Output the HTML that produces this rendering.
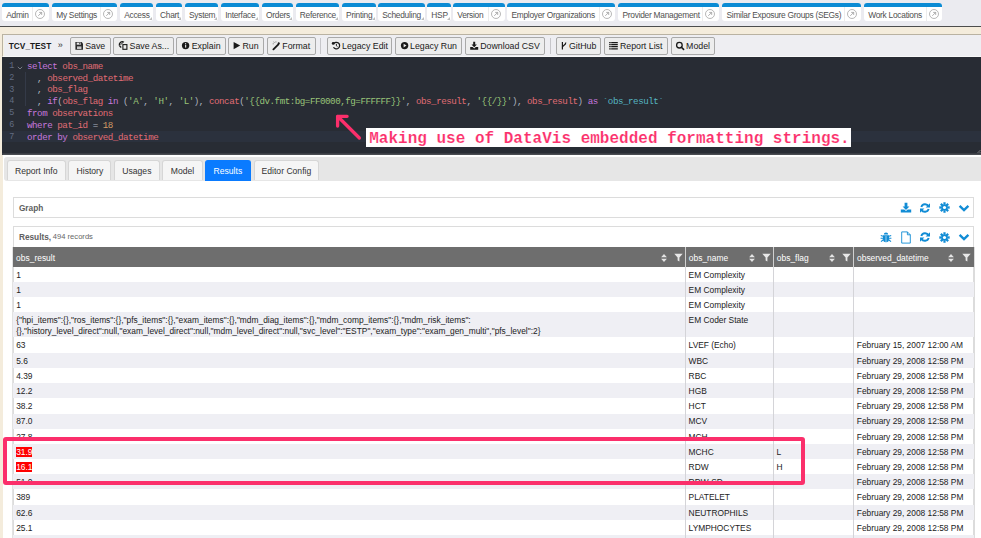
<!DOCTYPE html>
<html><head><meta charset="utf-8"><style>
html,body{margin:0;padding:0;width:981px;height:538px;overflow:hidden;background:#f4ecdc}
div{box-sizing:content-box}
</style></head><body>
<div style="position:absolute;left:0.00px;top:0.00px;width:981.00px;height:26.00px;background:#ebebf0"></div><div style="position:absolute;left:0.00px;top:26.00px;width:981.00px;height:1.00px;background:#4d4d4d"></div><div style="position:absolute;left:0.00px;top:27.00px;width:981.00px;height:511.00px;background:#f4ecdc"></div><div style="position:absolute;left:2.00px;top:3.00px;width:47.00px;height:18.00px;background:#fff;border-radius:3px;"></div><div style="position:absolute;left:2.00px;top:3.00px;width:47.00px;height:4.00px;background:#0b8bd4;border-radius:3px 3px 0 0;"></div><div style="position:absolute;left:6.20px;top:11.19px;font:400 8.4px/8.4px 'Liberation Sans', sans-serif;color:#505050;white-space:pre;letter-spacing:-0.27px">Admin</div><div style="position:absolute;left:31.80px;top:7.00px;width:0.80px;height:14.00px;background:#ececec"></div><svg width="10" height="10" viewBox="0 0 10 10" style="position:absolute;left:35.10px;top:8.90px"><circle cx="5" cy="5" r="4.5" fill="none" stroke="#9a9a9a" stroke-width="0.7"/><path d="M3.3 6.8 L6.6 3.5 M4.2 3.4 H6.7 V5.9" fill="none" stroke="#9a9a9a" stroke-width="0.8"/></svg><div style="position:absolute;left:52.00px;top:3.00px;width:65.20px;height:18.00px;background:#fff;border-radius:3px;"></div><div style="position:absolute;left:52.00px;top:3.00px;width:65.20px;height:4.00px;background:#0b8bd4;border-radius:3px 3px 0 0;"></div><div style="position:absolute;left:56.20px;top:11.19px;font:400 8.4px/8.4px 'Liberation Sans', sans-serif;color:#505050;white-space:pre;letter-spacing:-0.27px">My Settings</div><div style="position:absolute;left:100.30px;top:7.00px;width:0.80px;height:14.00px;background:#ececec"></div><svg width="10" height="10" viewBox="0 0 10 10" style="position:absolute;left:103.45px;top:8.90px"><circle cx="5" cy="5" r="4.5" fill="none" stroke="#9a9a9a" stroke-width="0.7"/><path d="M3.3 6.8 L6.6 3.5 M4.2 3.4 H6.7 V5.9" fill="none" stroke="#9a9a9a" stroke-width="0.8"/></svg><div style="position:absolute;left:120.00px;top:3.00px;width:32.80px;height:18.00px;background:#fff;border-radius:3px;"></div><div style="position:absolute;left:120.00px;top:3.00px;width:32.80px;height:4.00px;background:#0b8bd4;border-radius:3px 3px 0 0;"></div><div style="position:absolute;left:124.20px;top:11.19px;font:400 8.4px/8.4px 'Liberation Sans', sans-serif;color:#505050;white-space:pre;letter-spacing:-0.27px">Access</div><svg width="3" height="3" viewBox="0 0 3 3" style="position:absolute;left:148.80px;top:17.00px"><path d="M3 0 V3 H0 Z" fill="#bdbdbd"/></svg><div style="position:absolute;left:155.80px;top:3.00px;width:25.90px;height:18.00px;background:#fff;border-radius:3px;"></div><div style="position:absolute;left:155.80px;top:3.00px;width:25.90px;height:4.00px;background:#0b8bd4;border-radius:3px 3px 0 0;"></div><div style="position:absolute;left:160.00px;top:11.19px;font:400 8.4px/8.4px 'Liberation Sans', sans-serif;color:#505050;white-space:pre;letter-spacing:-0.27px">Chart</div><svg width="3" height="3" viewBox="0 0 3 3" style="position:absolute;left:177.70px;top:17.00px"><path d="M3 0 V3 H0 Z" fill="#bdbdbd"/></svg><div style="position:absolute;left:184.80px;top:3.00px;width:33.30px;height:18.00px;background:#fff;border-radius:3px;"></div><div style="position:absolute;left:184.80px;top:3.00px;width:33.30px;height:4.00px;background:#0b8bd4;border-radius:3px 3px 0 0;"></div><div style="position:absolute;left:189.00px;top:11.19px;font:400 8.4px/8.4px 'Liberation Sans', sans-serif;color:#505050;white-space:pre;letter-spacing:-0.27px">System</div><svg width="3" height="3" viewBox="0 0 3 3" style="position:absolute;left:214.10px;top:17.00px"><path d="M3 0 V3 H0 Z" fill="#bdbdbd"/></svg><div style="position:absolute;left:221.00px;top:3.00px;width:37.70px;height:18.00px;background:#fff;border-radius:3px;"></div><div style="position:absolute;left:221.00px;top:3.00px;width:37.70px;height:4.00px;background:#0b8bd4;border-radius:3px 3px 0 0;"></div><div style="position:absolute;left:225.20px;top:11.19px;font:400 8.4px/8.4px 'Liberation Sans', sans-serif;color:#505050;white-space:pre;letter-spacing:-0.27px">Interface</div><svg width="3" height="3" viewBox="0 0 3 3" style="position:absolute;left:254.70px;top:17.00px"><path d="M3 0 V3 H0 Z" fill="#bdbdbd"/></svg><div style="position:absolute;left:261.80px;top:3.00px;width:31.10px;height:18.00px;background:#fff;border-radius:3px;"></div><div style="position:absolute;left:261.80px;top:3.00px;width:31.10px;height:4.00px;background:#0b8bd4;border-radius:3px 3px 0 0;"></div><div style="position:absolute;left:266.00px;top:11.19px;font:400 8.4px/8.4px 'Liberation Sans', sans-serif;color:#505050;white-space:pre;letter-spacing:-0.27px">Orders</div><svg width="3" height="3" viewBox="0 0 3 3" style="position:absolute;left:288.90px;top:17.00px"><path d="M3 0 V3 H0 Z" fill="#bdbdbd"/></svg><div style="position:absolute;left:295.60px;top:3.00px;width:43.60px;height:18.00px;background:#fff;border-radius:3px;"></div><div style="position:absolute;left:295.60px;top:3.00px;width:43.60px;height:4.00px;background:#0b8bd4;border-radius:3px 3px 0 0;"></div><div style="position:absolute;left:299.80px;top:11.19px;font:400 8.4px/8.4px 'Liberation Sans', sans-serif;color:#505050;white-space:pre;letter-spacing:-0.27px">Reference</div><svg width="3" height="3" viewBox="0 0 3 3" style="position:absolute;left:335.20px;top:17.00px"><path d="M3 0 V3 H0 Z" fill="#bdbdbd"/></svg><div style="position:absolute;left:341.90px;top:3.00px;width:33.80px;height:18.00px;background:#fff;border-radius:3px;"></div><div style="position:absolute;left:341.90px;top:3.00px;width:33.80px;height:4.00px;background:#0b8bd4;border-radius:3px 3px 0 0;"></div><div style="position:absolute;left:346.10px;top:11.19px;font:400 8.4px/8.4px 'Liberation Sans', sans-serif;color:#505050;white-space:pre;letter-spacing:-0.27px">Printing</div><svg width="3" height="3" viewBox="0 0 3 3" style="position:absolute;left:371.70px;top:17.00px"><path d="M3 0 V3 H0 Z" fill="#bdbdbd"/></svg><div style="position:absolute;left:378.00px;top:3.00px;width:46.70px;height:18.00px;background:#fff;border-radius:3px;"></div><div style="position:absolute;left:378.00px;top:3.00px;width:46.70px;height:4.00px;background:#0b8bd4;border-radius:3px 3px 0 0;"></div><div style="position:absolute;left:382.20px;top:11.19px;font:400 8.4px/8.4px 'Liberation Sans', sans-serif;color:#505050;white-space:pre;letter-spacing:-0.27px">Scheduling</div><svg width="3" height="3" viewBox="0 0 3 3" style="position:absolute;left:420.70px;top:17.00px"><path d="M3 0 V3 H0 Z" fill="#bdbdbd"/></svg><div style="position:absolute;left:427.10px;top:3.00px;width:23.90px;height:18.00px;background:#fff;border-radius:3px;"></div><div style="position:absolute;left:427.10px;top:3.00px;width:23.90px;height:4.00px;background:#0b8bd4;border-radius:3px 3px 0 0;"></div><div style="position:absolute;left:431.30px;top:11.19px;font:400 8.4px/8.4px 'Liberation Sans', sans-serif;color:#505050;white-space:pre;letter-spacing:-0.27px">HSP</div><svg width="3" height="3" viewBox="0 0 3 3" style="position:absolute;left:447.00px;top:17.00px"><path d="M3 0 V3 H0 Z" fill="#bdbdbd"/></svg><div style="position:absolute;left:453.10px;top:3.00px;width:51.60px;height:18.00px;background:#fff;border-radius:3px;"></div><div style="position:absolute;left:453.10px;top:3.00px;width:51.60px;height:4.00px;background:#0b8bd4;border-radius:3px 3px 0 0;"></div><div style="position:absolute;left:457.30px;top:11.19px;font:400 8.4px/8.4px 'Liberation Sans', sans-serif;color:#505050;white-space:pre;letter-spacing:-0.27px">Version</div><div style="position:absolute;left:487.60px;top:7.00px;width:0.80px;height:14.00px;background:#ececec"></div><svg width="10" height="10" viewBox="0 0 10 10" style="position:absolute;left:490.85px;top:8.90px"><circle cx="5" cy="5" r="4.5" fill="none" stroke="#9a9a9a" stroke-width="0.7"/><path d="M3.3 6.8 L6.6 3.5 M4.2 3.4 H6.7 V5.9" fill="none" stroke="#9a9a9a" stroke-width="0.8"/></svg><div style="position:absolute;left:507.20px;top:3.00px;width:107.90px;height:18.00px;background:#fff;border-radius:3px;"></div><div style="position:absolute;left:507.20px;top:3.00px;width:107.90px;height:4.00px;background:#0b8bd4;border-radius:3px 3px 0 0;"></div><div style="position:absolute;left:511.40px;top:11.19px;font:400 8.4px/8.4px 'Liberation Sans', sans-serif;color:#505050;white-space:pre;letter-spacing:-0.27px">Employer Organizations</div><div style="position:absolute;left:598.60px;top:7.00px;width:0.80px;height:14.00px;background:#ececec"></div><svg width="10" height="10" viewBox="0 0 10 10" style="position:absolute;left:601.55px;top:8.90px"><circle cx="5" cy="5" r="4.5" fill="none" stroke="#9a9a9a" stroke-width="0.7"/><path d="M3.3 6.8 L6.6 3.5 M4.2 3.4 H6.7 V5.9" fill="none" stroke="#9a9a9a" stroke-width="0.8"/></svg><div style="position:absolute;left:618.30px;top:3.00px;width:100.90px;height:18.00px;background:#fff;border-radius:3px;"></div><div style="position:absolute;left:618.30px;top:3.00px;width:100.90px;height:4.00px;background:#0b8bd4;border-radius:3px 3px 0 0;"></div><div style="position:absolute;left:622.50px;top:11.19px;font:400 8.4px/8.4px 'Liberation Sans', sans-serif;color:#505050;white-space:pre;letter-spacing:-0.27px">Provider Management</div><div style="position:absolute;left:702.30px;top:7.00px;width:0.80px;height:14.00px;background:#ececec"></div><svg width="10" height="10" viewBox="0 0 10 10" style="position:absolute;left:705.45px;top:8.90px"><circle cx="5" cy="5" r="4.5" fill="none" stroke="#9a9a9a" stroke-width="0.7"/><path d="M3.3 6.8 L6.6 3.5 M4.2 3.4 H6.7 V5.9" fill="none" stroke="#9a9a9a" stroke-width="0.8"/></svg><div style="position:absolute;left:722.30px;top:3.00px;width:138.60px;height:18.00px;background:#fff;border-radius:3px;"></div><div style="position:absolute;left:722.30px;top:3.00px;width:138.60px;height:4.00px;background:#0b8bd4;border-radius:3px 3px 0 0;"></div><div style="position:absolute;left:726.50px;top:11.19px;font:400 8.4px/8.4px 'Liberation Sans', sans-serif;color:#505050;white-space:pre;letter-spacing:-0.27px">Similar Exposure Groups (SEGs)</div><div style="position:absolute;left:844.00px;top:7.00px;width:0.80px;height:14.00px;background:#ececec"></div><svg width="10" height="10" viewBox="0 0 10 10" style="position:absolute;left:847.15px;top:8.90px"><circle cx="5" cy="5" r="4.5" fill="none" stroke="#9a9a9a" stroke-width="0.7"/><path d="M3.3 6.8 L6.6 3.5 M4.2 3.4 H6.7 V5.9" fill="none" stroke="#9a9a9a" stroke-width="0.8"/></svg><div style="position:absolute;left:864.00px;top:3.00px;width:77.90px;height:18.00px;background:#fff;border-radius:3px;"></div><div style="position:absolute;left:864.00px;top:3.00px;width:77.90px;height:4.00px;background:#0b8bd4;border-radius:3px 3px 0 0;"></div><div style="position:absolute;left:868.20px;top:11.19px;font:400 8.4px/8.4px 'Liberation Sans', sans-serif;color:#505050;white-space:pre;letter-spacing:-0.27px">Work Locations</div><div style="position:absolute;left:925.90px;top:7.00px;width:0.80px;height:14.00px;background:#ececec"></div><svg width="10" height="10" viewBox="0 0 10 10" style="position:absolute;left:928.60px;top:8.90px"><circle cx="5" cy="5" r="4.5" fill="none" stroke="#9a9a9a" stroke-width="0.7"/><path d="M3.3 6.8 L6.6 3.5 M4.2 3.4 H6.7 V5.9" fill="none" stroke="#9a9a9a" stroke-width="0.8"/></svg><div style="position:absolute;left:2.00px;top:34.00px;width:979.00px;height:23.00px;background:#eeeef2;border-top:1px solid #b9b2a2;border-left:1px solid #b9b2a2;border-bottom:1.5px solid #f8f8f8;box-sizing:border-box"></div><div style="position:absolute;left:8.80px;top:42.07px;font:700 8.3px/8.3px 'Liberation Sans', sans-serif;color:#1a1a1a;white-space:pre;">TCV_TEST</div><div style="position:absolute;left:3.00px;top:35.00px;width:1.00px;height:20.50px;background:#f6f2e4"></div><div style="position:absolute;left:57.70px;top:41.48px;font:400 9px/9px 'Liberation Sans', sans-serif;color:#333;white-space:pre;">»</div><div style="position:absolute;left:70.00px;top:37.00px;width:41.00px;height:18.00px;background:#ededed;border:1px solid #a9a9a9;border-radius:2px;box-sizing:border-box"></div><div style="position:absolute;left:85.20px;top:41.85px;font:400 8.8px/8.8px 'Liberation Sans', sans-serif;color:#1a1a1a;white-space:pre;">Save</div><div style="position:absolute;left:113.00px;top:37.00px;width:61.00px;height:18.00px;background:#ededed;border:1px solid #a9a9a9;border-radius:2px;box-sizing:border-box"></div><div style="position:absolute;left:129.60px;top:41.85px;font:400 8.8px/8.8px 'Liberation Sans', sans-serif;color:#1a1a1a;white-space:pre;">Save As...</div><div style="position:absolute;left:176.00px;top:37.00px;width:50.00px;height:18.00px;background:#ededed;border:1px solid #a9a9a9;border-radius:2px;box-sizing:border-box"></div><div style="position:absolute;left:191.70px;top:41.85px;font:400 8.8px/8.8px 'Liberation Sans', sans-serif;color:#1a1a1a;white-space:pre;">Explain</div><div style="position:absolute;left:228.00px;top:37.00px;width:36.00px;height:18.00px;background:#ededed;border:1px solid #a9a9a9;border-radius:2px;box-sizing:border-box"></div><div style="position:absolute;left:242.40px;top:41.85px;font:400 8.8px/8.8px 'Liberation Sans', sans-serif;color:#1a1a1a;white-space:pre;">Run</div><div style="position:absolute;left:267.00px;top:37.00px;width:49.00px;height:18.00px;background:#ededed;border:1px solid #a9a9a9;border-radius:2px;box-sizing:border-box"></div><div style="position:absolute;left:282.30px;top:41.85px;font:400 8.8px/8.8px 'Liberation Sans', sans-serif;color:#1a1a1a;white-space:pre;">Format</div><div style="position:absolute;left:327.00px;top:37.00px;width:65.00px;height:18.00px;background:#ededed;border:1px solid #a9a9a9;border-radius:2px;box-sizing:border-box"></div><div style="position:absolute;left:342.00px;top:41.85px;font:400 8.8px/8.8px 'Liberation Sans', sans-serif;color:#1a1a1a;white-space:pre;">Legacy Edit</div><div style="position:absolute;left:395.00px;top:37.00px;width:67.00px;height:18.00px;background:#ededed;border:1px solid #a9a9a9;border-radius:2px;box-sizing:border-box"></div><div style="position:absolute;left:410.00px;top:41.85px;font:400 8.8px/8.8px 'Liberation Sans', sans-serif;color:#1a1a1a;white-space:pre;">Legacy Run</div><div style="position:absolute;left:465.00px;top:37.00px;width:80.00px;height:18.00px;background:#ededed;border:1px solid #a9a9a9;border-radius:2px;box-sizing:border-box"></div><div style="position:absolute;left:480.20px;top:41.85px;font:400 8.8px/8.8px 'Liberation Sans', sans-serif;color:#1a1a1a;white-space:pre;">Download CSV</div><div style="position:absolute;left:556.00px;top:37.00px;width:45.00px;height:18.00px;background:#ededed;border:1px solid #a9a9a9;border-radius:2px;box-sizing:border-box"></div><div style="position:absolute;left:569.00px;top:41.85px;font:400 8.8px/8.8px 'Liberation Sans', sans-serif;color:#1a1a1a;white-space:pre;">GitHub</div><div style="position:absolute;left:604.00px;top:37.00px;width:64.00px;height:18.00px;background:#ededed;border:1px solid #a9a9a9;border-radius:2px;box-sizing:border-box"></div><div style="position:absolute;left:619.90px;top:41.85px;font:400 8.8px/8.8px 'Liberation Sans', sans-serif;color:#1a1a1a;white-space:pre;">Report List</div><div style="position:absolute;left:671.00px;top:37.00px;width:44.00px;height:18.00px;background:#ededed;border:1px solid #a9a9a9;border-radius:2px;box-sizing:border-box"></div><div style="position:absolute;left:686.10px;top:41.85px;font:400 8.8px/8.8px 'Liberation Sans', sans-serif;color:#1a1a1a;white-space:pre;">Model</div><svg width="981" height="23" viewBox="0 34 981 23" style="position:absolute;left:0;top:34px">
<path d="M75.4 42 H81.6 L83 43.4 V49.8 H75.4 Z" fill="#2a2a2a"/><rect x="76.7" y="42.6" width="4.2" height="2.1" fill="#e8e8e8"/><rect x="79.3" y="42.8" width="1" height="1.5" fill="#2a2a2a"/><rect x="77" y="46.4" width="4.4" height="2.6" fill="#c8c8c8"/>
<path d="M119.4 45.6 A3.2 3.2 0 0 1 123.6 41.8" fill="none" stroke="#1a1a1a" stroke-width="1.3"/><path d="M121.2 47.5 L119.5 45.8" stroke="#1a1a1a" stroke-width="1.3"/><path d="M123.6 41.8 L121.5 43.9 L120.6 44.8" stroke="#1a1a1a" stroke-width="1"/><rect x="122.9" y="44.6" width="4" height="4.7" fill="none" stroke="#1a1a1a" stroke-width="1.1"/>
<circle cx="185.6" cy="45.6" r="3.7" fill="#1a1a1a"/><rect x="185.1" y="44.7" width="1.1" height="2.9" fill="#eee"/><circle cx="185.6" cy="43.6" r="0.65" fill="#eee"/>
<path d="M233.6 41.9 L240.2 45.55 L233.6 49.2 Z" fill="#1a1a1a"/>
<path d="M273.4 49.3 L278.4 44.3" stroke="#1a1a1a" stroke-width="1.9" stroke-linecap="round"/><path d="M277.4 43.2 L278.8 41.9 L280.1 43.2 L278.8 44.6 Z" fill="#1a1a1a"/><path d="M273.6 41.6 L274.6 43 M275.9 41.2 V42.6 M272.6 43.8 H274" stroke="#8a8a8a" stroke-width="0.8"/>
<path d="M333.5 43.9 A3.3 3.3 0 1 1 333.5 47.3" fill="none" stroke="#1a1a1a" stroke-width="1.25"/><circle cx="333.2" cy="43.4" r="1.4" fill="#1a1a1a"/><path d="M336.4 43.9 V45.8 L337.5 46.7" stroke="#1a1a1a" stroke-width="0.95" fill="none"/>
<circle cx="404.6" cy="45.6" r="3.7" fill="#1a1a1a"/><path d="M403.6 43.7 L406.5 45.6 L403.6 47.5 Z" fill="#eee"/>
<path d="M473.2 41.8 H475.2 V44.6 H476.9 L474.2 47.3 L471.5 44.6 H473.2 Z" fill="#1a1a1a"/><path d="M470.2 47.1 H472.6 L474.2 48.6 L475.8 47.1 H478.2 V49.7 H470.2 Z" fill="#1a1a1a"/>
<path d="M562.4 42 V49.6" stroke="#1a1a1a" stroke-width="1.2"/><path d="M562.4 47.2 C562.4 45.4 565.8 45.6 565.8 42.6" stroke="#1a1a1a" stroke-width="1.2" fill="none"/>
<path d="M609.2 42.5 H617.8 M609.2 44.6 H617.8 M609.2 46.7 H617.8 M609.2 48.8 H617.8" stroke="#1a1a1a" stroke-width="1.25"/><path d="M610.9 41.5 V49.8" stroke="#ededed" stroke-width="0.45"/>
<circle cx="679.4" cy="45.2" r="2.8" fill="none" stroke="#1a1a1a" stroke-width="1.3"/><path d="M681.4 47.2 L683.6 49.4" stroke="#1a1a1a" stroke-width="1.6" stroke-linecap="round"/>
</svg><div style="position:absolute;left:320.30px;top:38.00px;width:1.20px;height:16.00px;background:#c6c6ca"></div><div style="position:absolute;left:550.10px;top:38.00px;width:1.20px;height:16.00px;background:#c6c6ca"></div><div style="position:absolute;left:2.00px;top:57.00px;width:979.00px;height:97.00px;background:#282c34"></div><div style="position:absolute;left:2.00px;top:131.00px;width:979.00px;height:11.00px;background:#2b313d"></div><svg width="5" height="5" viewBox="0 0 5 5" style="position:absolute;left:976px;top:148.5px"><path d="M4.5 1 L1 4.5 M4.5 3 L3 4.5" stroke="#8a8a8a" stroke-width="0.8"/></svg><div style="position:absolute;left:2.00px;top:153.00px;width:979.00px;height:2.00px;background:#3a3d44"></div><div style="position:absolute;left:9.20px;top:62.05px;font:400 8.42px/8.42px 'Liberation Mono', monospace;color:#636d83;white-space:pre;">1</div><div style="position:absolute;left:27.00px;top:61.85px;font:400 9.2px/9.2px 'Liberation Mono', monospace;color:#abb2bf;white-space:pre;letter-spacing:-0.466px"><span style="color:#c678dd">select</span> <span style="color:#e06c75">obs_name</span></div><div style="position:absolute;left:9.20px;top:73.85px;font:400 8.42px/8.42px 'Liberation Mono', monospace;color:#636d83;white-space:pre;">2</div><div style="position:absolute;left:27.00px;top:73.65px;font:400 9.2px/9.2px 'Liberation Mono', monospace;color:#abb2bf;white-space:pre;letter-spacing:-0.466px">  <span style="color:#abb2bf">,</span> <span style="color:#e06c75">observed_datetime</span></div><div style="position:absolute;left:9.20px;top:85.65px;font:400 8.42px/8.42px 'Liberation Mono', monospace;color:#636d83;white-space:pre;">3</div><div style="position:absolute;left:27.00px;top:85.45px;font:400 9.2px/9.2px 'Liberation Mono', monospace;color:#abb2bf;white-space:pre;letter-spacing:-0.466px">  <span style="color:#abb2bf">,</span> <span style="color:#e06c75">obs_flag</span></div><div style="position:absolute;left:9.20px;top:97.45px;font:400 8.42px/8.42px 'Liberation Mono', monospace;color:#636d83;white-space:pre;">4</div><div style="position:absolute;left:27.00px;top:97.25px;font:400 9.2px/9.2px 'Liberation Mono', monospace;color:#abb2bf;white-space:pre;letter-spacing:-0.466px">  <span style="color:#abb2bf">,</span> <span style="color:#c678dd">if</span><span style="color:#abb2bf">(</span><span style="color:#e06c75">obs_flag</span> <span style="color:#c678dd">in</span> <span style="color:#abb2bf">(</span><span style="color:#98c379">'A'</span><span style="color:#abb2bf">, </span><span style="color:#98c379">'H'</span><span style="color:#abb2bf">, </span><span style="color:#98c379">'L'</span><span style="color:#abb2bf">), </span><span style="color:#e06c75">concat</span><span style="color:#abb2bf">(</span><span style="color:#98c379">'{{dv.fmt:bg=FF0000,fg=FFFFFF}}'</span><span style="color:#abb2bf">, </span><span style="color:#e06c75">obs_result</span><span style="color:#abb2bf">, </span><span style="color:#98c379">'{{/}}'</span><span style="color:#abb2bf">), </span><span style="color:#e06c75">obs_result</span><span style="color:#abb2bf">)</span> <span style="color:#c678dd">as</span> <span style="color:#56b6c2">`obs_result`</span></div><div style="position:absolute;left:9.20px;top:109.25px;font:400 8.42px/8.42px 'Liberation Mono', monospace;color:#636d83;white-space:pre;">5</div><div style="position:absolute;left:27.00px;top:109.05px;font:400 9.2px/9.2px 'Liberation Mono', monospace;color:#abb2bf;white-space:pre;letter-spacing:-0.466px"><span style="color:#c678dd">from</span> <span style="color:#e06c75">observations</span></div><div style="position:absolute;left:9.20px;top:121.05px;font:400 8.42px/8.42px 'Liberation Mono', monospace;color:#636d83;white-space:pre;">6</div><div style="position:absolute;left:27.00px;top:120.85px;font:400 9.2px/9.2px 'Liberation Mono', monospace;color:#abb2bf;white-space:pre;letter-spacing:-0.466px"><span style="color:#c678dd">where</span> <span style="color:#e06c75">pat_id</span> <span style="color:#abb2bf">=</span> <span style="color:#d19a66">18</span></div><div style="position:absolute;left:9.20px;top:132.85px;font:400 8.42px/8.42px 'Liberation Mono', monospace;color:#636d83;white-space:pre;">7</div><div style="position:absolute;left:27.00px;top:132.65px;font:400 9.2px/9.2px 'Liberation Mono', monospace;color:#abb2bf;white-space:pre;letter-spacing:-0.466px"><span style="color:#c678dd">order by</span> <span style="color:#e06c75">observed_datetime</span></div><svg width="6" height="4" viewBox="0 0 6 4" style="position:absolute;left:16.5px;top:65.8px"><path d="M0.8 0.8 L3 3 L5.2 0.8" stroke="#8a8f99" stroke-width="0.8" fill="none"/></svg><div style="position:absolute;left:25.20px;top:72.00px;width:0.80px;height:34.00px;background:#343a48"></div><svg width="40" height="40" viewBox="0 0 40 40" style="position:absolute;left:328px;top:108px"><path d="M9.8 8.5 L31.4 30" stroke="#fb2f6b" stroke-width="3.3" stroke-linecap="round" fill="none"/><path d="M19.1 8.3 H9.6 V18.1" stroke="#fb2f6b" stroke-width="3.3" stroke-linecap="round" stroke-linejoin="round" fill="none"/></svg><div style="position:absolute;left:365.70px;top:128.20px;width:485.30px;height:18.50px;background:#fff"></div><div style="position:absolute;left:369.20px;top:131.12px;font:700 16.03px/16.03px 'Liberation Mono', monospace;color:#fb2f6b;white-space:pre;-webkit-text-stroke:0.15px #fff">Making use of DataVis embedded formatting strings.</div><div style="position:absolute;left:2.50px;top:155.00px;width:978.50px;height:383.00px;background:#fff"></div><div style="position:absolute;left:4.10px;top:157.00px;width:976.90px;height:23.50px;background:#e6e6e6;border-radius:3px 0 0 3px"></div><div style="position:absolute;left:2.50px;top:153.60px;width:978.50px;height:1.40px;background:#4a4d52"></div><div style="position:absolute;left:6.70px;top:160.00px;width:59.10px;height:20.30px;background:#f5f5f5;border:1px solid #d6d6d6;border-bottom:none;border-radius:3px 3px 0 0;box-sizing:border-box"></div><div style="position:absolute;left:6.70px;top:160.6px;width:59.10px;text-align:center;font:400 8.6px/20px 'Liberation Sans', sans-serif;color:#333;white-space:pre">Report Info</div><div style="position:absolute;left:68.30px;top:160.00px;width:43.20px;height:20.30px;background:#f5f5f5;border:1px solid #d6d6d6;border-bottom:none;border-radius:3px 3px 0 0;box-sizing:border-box"></div><div style="position:absolute;left:68.30px;top:160.6px;width:43.20px;text-align:center;font:400 8.6px/20px 'Liberation Sans', sans-serif;color:#333;white-space:pre">History</div><div style="position:absolute;left:114.20px;top:160.00px;width:45.40px;height:20.30px;background:#f5f5f5;border:1px solid #d6d6d6;border-bottom:none;border-radius:3px 3px 0 0;box-sizing:border-box"></div><div style="position:absolute;left:114.20px;top:160.6px;width:45.40px;text-align:center;font:400 8.6px/20px 'Liberation Sans', sans-serif;color:#333;white-space:pre">Usages</div><div style="position:absolute;left:162.40px;top:160.00px;width:40.20px;height:20.30px;background:#f5f5f5;border:1px solid #d6d6d6;border-bottom:none;border-radius:3px 3px 0 0;box-sizing:border-box"></div><div style="position:absolute;left:162.40px;top:160.6px;width:40.20px;text-align:center;font:400 8.6px/20px 'Liberation Sans', sans-serif;color:#333;white-space:pre">Model</div><div style="position:absolute;left:205.00px;top:160.00px;width:45.80px;height:21.00px;background:#0a7bff;border:1px solid #0a7bff;border-bottom:none;border-radius:3px 3px 0 0;box-sizing:border-box"></div><div style="position:absolute;left:205.00px;top:160.6px;width:45.80px;text-align:center;font:400 8.6px/20px 'Liberation Sans', sans-serif;color:#fff;white-space:pre">Results</div><div style="position:absolute;left:253.50px;top:160.00px;width:65.80px;height:20.30px;background:#f5f5f5;border:1px solid #d6d6d6;border-bottom:none;border-radius:3px 3px 0 0;box-sizing:border-box"></div><div style="position:absolute;left:253.50px;top:160.6px;width:65.80px;text-align:center;font:400 8.6px/20px 'Liberation Sans', sans-serif;color:#333;white-space:pre">Editor Config</div><div style="position:absolute;left:12.60px;top:197.20px;width:961.40px;height:20.40px;border:1px solid #dcdcdc;box-sizing:border-box;background:#fff"></div><div style="position:absolute;left:18.90px;top:203.77px;font:700 8.3px/8.3px 'Liberation Sans', sans-serif;color:#606060;white-space:pre;">Graph</div><div style="position:absolute;left:12.60px;top:226.00px;width:961.40px;height:312.00px;border:1px solid #dcdcdc;border-bottom:none;box-sizing:border-box;background:#fff"></div><div style="position:absolute;left:18.90px;top:232.77px;font:700 8.3px/8.3px 'Liberation Sans', sans-serif;color:#606060;white-space:pre;">Results,</div><div style="position:absolute;left:52.80px;top:233.37px;font:400 7.6px/7.6px 'Liberation Sans', sans-serif;color:#666;white-space:pre;">494 records</div><svg width="12" height="12" viewBox="0 0 12 12" style="position:absolute;left:899.60px;top:201.50px"><path d="M4.6 0.8 H7.4 V4.6 H9.4 L6 8 L2.6 4.6 H4.6 Z" fill="#118cd5"/><path d="M0.8 7.4 H4.3 L6 9 L7.7 7.4 H11.2 V10.6 H0.8 Z" fill="#118cd5"/></svg><svg width="12" height="12" viewBox="0 0 12 12" style="position:absolute;left:919.00px;top:201.50px"><path d="M9.6 4.3 A4 4 0 0 0 2.3 5" stroke="#118cd5" stroke-width="1.9" fill="none"/><path d="M11 1.2 V5.6 H6.6 Z" fill="#118cd5"/><path d="M2.4 7.7 A4 4 0 0 0 9.7 7" stroke="#118cd5" stroke-width="1.9" fill="none"/><path d="M1 10.8 V6.4 H5.4 Z" fill="#118cd5"/></svg><svg width="11" height="11" viewBox="0 0 12 12" style="position:absolute;left:939.40px;top:202.00px"><path d="M4.75 0.35 H7.25 L7.1 3 H4.9 Z" fill="#118cd5" transform="rotate(0 6 6)"/><path d="M4.75 0.35 H7.25 L7.1 3 H4.9 Z" fill="#118cd5" transform="rotate(45 6 6)"/><path d="M4.75 0.35 H7.25 L7.1 3 H4.9 Z" fill="#118cd5" transform="rotate(90 6 6)"/><path d="M4.75 0.35 H7.25 L7.1 3 H4.9 Z" fill="#118cd5" transform="rotate(135 6 6)"/><path d="M4.75 0.35 H7.25 L7.1 3 H4.9 Z" fill="#118cd5" transform="rotate(180 6 6)"/><path d="M4.75 0.35 H7.25 L7.1 3 H4.9 Z" fill="#118cd5" transform="rotate(225 6 6)"/><path d="M4.75 0.35 H7.25 L7.1 3 H4.9 Z" fill="#118cd5" transform="rotate(270 6 6)"/><path d="M4.75 0.35 H7.25 L7.1 3 H4.9 Z" fill="#118cd5" transform="rotate(315 6 6)"/><circle cx="6" cy="6" r="3.6" fill="#118cd5"/><circle cx="6" cy="6" r="1.75" fill="#fff"/></svg><svg width="12" height="12" viewBox="0 0 12 12" style="position:absolute;left:957.80px;top:201.50px"><path d="M1.6 3.9 L6 8.1 L10.4 3.9" stroke="#118cd5" stroke-width="2.4" fill="none"/></svg><svg width="12" height="12" viewBox="0 0 12 12" style="position:absolute;left:880.00px;top:231.10px"><path d="M3 4.2 H9 V8 A3 3.3 0 0 1 3 8 Z" fill="#118cd5"/><path d="M3.8 3.6 A2.2 2.2 0 0 1 8.2 3.6 Z" fill="#118cd5"/><path d="M0.8 4.4 L3 5.2 M0.6 7.2 H3 M1 10.6 L3.3 8.8 M11.2 4.4 L9 5.2 M11.4 7.2 H9 M11 10.6 L8.7 8.8" stroke="#118cd5" stroke-width="1.1"/><path d="M6 5 V11" stroke="#fff" stroke-width="0.6"/></svg><svg width="12" height="13" viewBox="0 0 12 13" style="position:absolute;left:899.60px;top:230.60px"><path d="M1.7 0.9 H7.4 L10.3 3.8 V12.1 H1.7 Z M7.4 0.9 V3.8 H10.3" stroke="#118cd5" stroke-width="0.9" fill="none" stroke-linejoin="round"/></svg><svg width="12" height="12" viewBox="0 0 12 12" style="position:absolute;left:919.00px;top:231.10px"><path d="M9.6 4.3 A4 4 0 0 0 2.3 5" stroke="#118cd5" stroke-width="1.9" fill="none"/><path d="M11 1.2 V5.6 H6.6 Z" fill="#118cd5"/><path d="M2.4 7.7 A4 4 0 0 0 9.7 7" stroke="#118cd5" stroke-width="1.9" fill="none"/><path d="M1 10.8 V6.4 H5.4 Z" fill="#118cd5"/></svg><svg width="11" height="11" viewBox="0 0 12 12" style="position:absolute;left:939.40px;top:231.60px"><path d="M4.75 0.35 H7.25 L7.1 3 H4.9 Z" fill="#118cd5" transform="rotate(0 6 6)"/><path d="M4.75 0.35 H7.25 L7.1 3 H4.9 Z" fill="#118cd5" transform="rotate(45 6 6)"/><path d="M4.75 0.35 H7.25 L7.1 3 H4.9 Z" fill="#118cd5" transform="rotate(90 6 6)"/><path d="M4.75 0.35 H7.25 L7.1 3 H4.9 Z" fill="#118cd5" transform="rotate(135 6 6)"/><path d="M4.75 0.35 H7.25 L7.1 3 H4.9 Z" fill="#118cd5" transform="rotate(180 6 6)"/><path d="M4.75 0.35 H7.25 L7.1 3 H4.9 Z" fill="#118cd5" transform="rotate(225 6 6)"/><path d="M4.75 0.35 H7.25 L7.1 3 H4.9 Z" fill="#118cd5" transform="rotate(270 6 6)"/><path d="M4.75 0.35 H7.25 L7.1 3 H4.9 Z" fill="#118cd5" transform="rotate(315 6 6)"/><circle cx="6" cy="6" r="3.6" fill="#118cd5"/><circle cx="6" cy="6" r="1.75" fill="#fff"/></svg><svg width="12" height="12" viewBox="0 0 12 12" style="position:absolute;left:957.80px;top:231.10px"><path d="M1.6 3.9 L6 8.1 L10.4 3.9" stroke="#118cd5" stroke-width="2.4" fill="none"/></svg><div style="position:absolute;left:13.00px;top:247.30px;width:960.50px;height:19.50px;background:#6e6e6e"></div><div style="position:absolute;left:16.10px;top:253.65px;font:400 8.45px/8.45px 'Liberation Sans', sans-serif;color:#fff;white-space:pre;">obs_result</div><svg width="6" height="10" viewBox="0 0 6 10" style="position:absolute;left:660.50px;top:252.80px"><path d="M0.1 4.3 L3 1.0 L5.9 4.3 Z M0.1 5.7 L3 9.0 L5.9 5.7 Z" fill="#e4e4e4"/></svg><svg width="9" height="9" viewBox="0 0 9 9" style="position:absolute;left:673.70px;top:252.50px"><path d="M0.3 0.8 H8.7 L5.4 4.4 V8.4 L3.6 7.4 V4.4 Z" fill="#e8e8e8"/></svg><div style="position:absolute;left:685.20px;top:247.30px;width:1.00px;height:290.70px;background:#d0d0d0"></div><div style="position:absolute;left:688.80px;top:253.65px;font:400 8.45px/8.45px 'Liberation Sans', sans-serif;color:#fff;white-space:pre;">obs_name</div><svg width="6" height="10" viewBox="0 0 6 10" style="position:absolute;left:748.50px;top:252.80px"><path d="M0.1 4.3 L3 1.0 L5.9 4.3 Z M0.1 5.7 L3 9.0 L5.9 5.7 Z" fill="#e4e4e4"/></svg><svg width="9" height="9" viewBox="0 0 9 9" style="position:absolute;left:761.70px;top:252.50px"><path d="M0.3 0.8 H8.7 L5.4 4.4 V8.4 L3.6 7.4 V4.4 Z" fill="#e8e8e8"/></svg><div style="position:absolute;left:773.20px;top:247.30px;width:1.00px;height:290.70px;background:#d0d0d0"></div><div style="position:absolute;left:776.80px;top:253.65px;font:400 8.45px/8.45px 'Liberation Sans', sans-serif;color:#fff;white-space:pre;">obs_flag</div><svg width="6" height="10" viewBox="0 0 6 10" style="position:absolute;left:828.70px;top:252.80px"><path d="M0.1 4.3 L3 1.0 L5.9 4.3 Z M0.1 5.7 L3 9.0 L5.9 5.7 Z" fill="#e4e4e4"/></svg><svg width="9" height="9" viewBox="0 0 9 9" style="position:absolute;left:841.90px;top:252.50px"><path d="M0.3 0.8 H8.7 L5.4 4.4 V8.4 L3.6 7.4 V4.4 Z" fill="#e8e8e8"/></svg><div style="position:absolute;left:853.40px;top:247.30px;width:1.00px;height:290.70px;background:#d0d0d0"></div><div style="position:absolute;left:857.00px;top:253.65px;font:400 8.45px/8.45px 'Liberation Sans', sans-serif;color:#fff;white-space:pre;">observed_datetime</div><svg width="6" height="10" viewBox="0 0 6 10" style="position:absolute;left:948.30px;top:252.80px"><path d="M0.1 4.3 L3 1.0 L5.9 4.3 Z M0.1 5.7 L3 9.0 L5.9 5.7 Z" fill="#e4e4e4"/></svg><svg width="9" height="9" viewBox="0 0 9 9" style="position:absolute;left:961.50px;top:252.50px"><path d="M0.3 0.8 H8.7 L5.4 4.4 V8.4 L3.6 7.4 V4.4 Z" fill="#e8e8e8"/></svg><div style="position:absolute;left:16.20px;top:270.79px;font:400 8.4px/8.4px 'Liberation Sans', sans-serif;color:#222;white-space:pre;">1</div><div style="position:absolute;left:688.60px;top:270.79px;font:400 8.4px/8.4px 'Liberation Sans', sans-serif;color:#222;white-space:pre;">EM Complexity</div><div style="position:absolute;left:776.60px;top:270.79px;font:400 8.4px/8.4px 'Liberation Sans', sans-serif;color:#222;white-space:pre;"></div><div style="position:absolute;left:856.80px;top:270.79px;font:400 8.4px/8.4px 'Liberation Sans', sans-serif;color:#222;white-space:pre;"></div><div style="position:absolute;left:13.00px;top:282.00px;width:960.50px;height:15.20px;background:#efeff4"></div><div style="position:absolute;left:16.20px;top:285.99px;font:400 8.4px/8.4px 'Liberation Sans', sans-serif;color:#222;white-space:pre;">1</div><div style="position:absolute;left:688.60px;top:285.99px;font:400 8.4px/8.4px 'Liberation Sans', sans-serif;color:#222;white-space:pre;">EM Complexity</div><div style="position:absolute;left:776.60px;top:285.99px;font:400 8.4px/8.4px 'Liberation Sans', sans-serif;color:#222;white-space:pre;"></div><div style="position:absolute;left:856.80px;top:285.99px;font:400 8.4px/8.4px 'Liberation Sans', sans-serif;color:#222;white-space:pre;"></div><div style="position:absolute;left:16.20px;top:301.19px;font:400 8.4px/8.4px 'Liberation Sans', sans-serif;color:#222;white-space:pre;">1</div><div style="position:absolute;left:688.60px;top:301.19px;font:400 8.4px/8.4px 'Liberation Sans', sans-serif;color:#222;white-space:pre;">EM Complexity</div><div style="position:absolute;left:776.60px;top:301.19px;font:400 8.4px/8.4px 'Liberation Sans', sans-serif;color:#222;white-space:pre;"></div><div style="position:absolute;left:856.80px;top:301.19px;font:400 8.4px/8.4px 'Liberation Sans', sans-serif;color:#222;white-space:pre;"></div><div style="position:absolute;left:13.00px;top:312.40px;width:960.50px;height:25.10px;background:#efeff4"></div><div style="position:absolute;left:16.20px;top:316.39px;font:400 8.4px/8.4px 'Liberation Sans', sans-serif;color:#222;white-space:pre;">{"hpi_items":{},"ros_items":{},"pfs_items":{},"exam_items":{},"mdm_diag_items":{},"mdm_comp_items":{},"mdm_risk_items":</div><div style="position:absolute;left:16.20px;top:326.59px;font:400 8.4px/8.4px 'Liberation Sans', sans-serif;color:#222;white-space:pre;">{},"history_level_direct":null,"exam_level_direct":null,"mdm_level_direct":null,"svc_level":"ESTP","exam_type":"exam_gen_multi","pfs_level":2}</div><div style="position:absolute;left:688.60px;top:316.39px;font:400 8.4px/8.4px 'Liberation Sans', sans-serif;color:#222;white-space:pre;">EM Coder State</div><div style="position:absolute;left:776.60px;top:316.39px;font:400 8.4px/8.4px 'Liberation Sans', sans-serif;color:#222;white-space:pre;"></div><div style="position:absolute;left:856.80px;top:316.39px;font:400 8.4px/8.4px 'Liberation Sans', sans-serif;color:#222;white-space:pre;"></div><div style="position:absolute;left:16.20px;top:341.49px;font:400 8.4px/8.4px 'Liberation Sans', sans-serif;color:#222;white-space:pre;">63</div><div style="position:absolute;left:688.60px;top:341.49px;font:400 8.4px/8.4px 'Liberation Sans', sans-serif;color:#222;white-space:pre;">LVEF (Echo)</div><div style="position:absolute;left:776.60px;top:341.49px;font:400 8.4px/8.4px 'Liberation Sans', sans-serif;color:#222;white-space:pre;"></div><div style="position:absolute;left:856.80px;top:341.49px;font:400 8.4px/8.4px 'Liberation Sans', sans-serif;color:#222;white-space:pre;">February 15, 2007 12:00 AM</div><div style="position:absolute;left:13.00px;top:352.70px;width:960.50px;height:15.20px;background:#efeff4"></div><div style="position:absolute;left:16.20px;top:356.69px;font:400 8.4px/8.4px 'Liberation Sans', sans-serif;color:#222;white-space:pre;">5.6</div><div style="position:absolute;left:688.60px;top:356.69px;font:400 8.4px/8.4px 'Liberation Sans', sans-serif;color:#222;white-space:pre;">WBC</div><div style="position:absolute;left:776.60px;top:356.69px;font:400 8.4px/8.4px 'Liberation Sans', sans-serif;color:#222;white-space:pre;"></div><div style="position:absolute;left:856.80px;top:356.69px;font:400 8.4px/8.4px 'Liberation Sans', sans-serif;color:#222;white-space:pre;">February 29, 2008 12:58 PM</div><div style="position:absolute;left:16.20px;top:371.89px;font:400 8.4px/8.4px 'Liberation Sans', sans-serif;color:#222;white-space:pre;">4.39</div><div style="position:absolute;left:688.60px;top:371.89px;font:400 8.4px/8.4px 'Liberation Sans', sans-serif;color:#222;white-space:pre;">RBC</div><div style="position:absolute;left:776.60px;top:371.89px;font:400 8.4px/8.4px 'Liberation Sans', sans-serif;color:#222;white-space:pre;"></div><div style="position:absolute;left:856.80px;top:371.89px;font:400 8.4px/8.4px 'Liberation Sans', sans-serif;color:#222;white-space:pre;">February 29, 2008 12:58 PM</div><div style="position:absolute;left:13.00px;top:383.10px;width:960.50px;height:15.20px;background:#efeff4"></div><div style="position:absolute;left:16.20px;top:387.09px;font:400 8.4px/8.4px 'Liberation Sans', sans-serif;color:#222;white-space:pre;">12.2</div><div style="position:absolute;left:688.60px;top:387.09px;font:400 8.4px/8.4px 'Liberation Sans', sans-serif;color:#222;white-space:pre;">HGB</div><div style="position:absolute;left:776.60px;top:387.09px;font:400 8.4px/8.4px 'Liberation Sans', sans-serif;color:#222;white-space:pre;"></div><div style="position:absolute;left:856.80px;top:387.09px;font:400 8.4px/8.4px 'Liberation Sans', sans-serif;color:#222;white-space:pre;">February 29, 2008 12:58 PM</div><div style="position:absolute;left:16.20px;top:402.29px;font:400 8.4px/8.4px 'Liberation Sans', sans-serif;color:#222;white-space:pre;">38.2</div><div style="position:absolute;left:688.60px;top:402.29px;font:400 8.4px/8.4px 'Liberation Sans', sans-serif;color:#222;white-space:pre;">HCT</div><div style="position:absolute;left:776.60px;top:402.29px;font:400 8.4px/8.4px 'Liberation Sans', sans-serif;color:#222;white-space:pre;"></div><div style="position:absolute;left:856.80px;top:402.29px;font:400 8.4px/8.4px 'Liberation Sans', sans-serif;color:#222;white-space:pre;">February 29, 2008 12:58 PM</div><div style="position:absolute;left:13.00px;top:413.50px;width:960.50px;height:15.20px;background:#efeff4"></div><div style="position:absolute;left:16.20px;top:417.49px;font:400 8.4px/8.4px 'Liberation Sans', sans-serif;color:#222;white-space:pre;">87.0</div><div style="position:absolute;left:688.60px;top:417.49px;font:400 8.4px/8.4px 'Liberation Sans', sans-serif;color:#222;white-space:pre;">MCV</div><div style="position:absolute;left:776.60px;top:417.49px;font:400 8.4px/8.4px 'Liberation Sans', sans-serif;color:#222;white-space:pre;"></div><div style="position:absolute;left:856.80px;top:417.49px;font:400 8.4px/8.4px 'Liberation Sans', sans-serif;color:#222;white-space:pre;">February 29, 2008 12:58 PM</div><div style="position:absolute;left:16.20px;top:432.69px;font:400 8.4px/8.4px 'Liberation Sans', sans-serif;color:#222;white-space:pre;">27.8</div><div style="position:absolute;left:688.60px;top:432.69px;font:400 8.4px/8.4px 'Liberation Sans', sans-serif;color:#222;white-space:pre;">MCH</div><div style="position:absolute;left:776.60px;top:432.69px;font:400 8.4px/8.4px 'Liberation Sans', sans-serif;color:#222;white-space:pre;"></div><div style="position:absolute;left:856.80px;top:432.69px;font:400 8.4px/8.4px 'Liberation Sans', sans-serif;color:#222;white-space:pre;">February 29, 2008 12:58 PM</div><div style="position:absolute;left:13.00px;top:443.90px;width:960.50px;height:15.20px;background:#efeff4"></div><div style="position:absolute;left:15.90px;top:446.90px;width:16.40px;height:9.90px;background:#ff0000"></div><div style="position:absolute;left:16.20px;top:447.89px;font:400 8.4px/8.4px 'Liberation Sans', sans-serif;color:#fff;white-space:pre;">31.9</div><div style="position:absolute;left:688.60px;top:447.89px;font:400 8.4px/8.4px 'Liberation Sans', sans-serif;color:#222;white-space:pre;">MCHC</div><div style="position:absolute;left:776.60px;top:447.89px;font:400 8.4px/8.4px 'Liberation Sans', sans-serif;color:#222;white-space:pre;">L</div><div style="position:absolute;left:856.80px;top:447.89px;font:400 8.4px/8.4px 'Liberation Sans', sans-serif;color:#222;white-space:pre;">February 29, 2008 12:58 PM</div><div style="position:absolute;left:15.90px;top:462.10px;width:16.40px;height:9.90px;background:#ff0000"></div><div style="position:absolute;left:16.20px;top:463.09px;font:400 8.4px/8.4px 'Liberation Sans', sans-serif;color:#fff;white-space:pre;">16.1</div><div style="position:absolute;left:688.60px;top:463.09px;font:400 8.4px/8.4px 'Liberation Sans', sans-serif;color:#222;white-space:pre;">RDW</div><div style="position:absolute;left:776.60px;top:463.09px;font:400 8.4px/8.4px 'Liberation Sans', sans-serif;color:#222;white-space:pre;">H</div><div style="position:absolute;left:856.80px;top:463.09px;font:400 8.4px/8.4px 'Liberation Sans', sans-serif;color:#222;white-space:pre;">February 29, 2008 12:58 PM</div><div style="position:absolute;left:13.00px;top:474.30px;width:960.50px;height:15.20px;background:#efeff4"></div><div style="position:absolute;left:16.20px;top:478.29px;font:400 8.4px/8.4px 'Liberation Sans', sans-serif;color:#222;white-space:pre;">51.0</div><div style="position:absolute;left:688.60px;top:478.29px;font:400 8.4px/8.4px 'Liberation Sans', sans-serif;color:#222;white-space:pre;">RDW-SD</div><div style="position:absolute;left:776.60px;top:478.29px;font:400 8.4px/8.4px 'Liberation Sans', sans-serif;color:#222;white-space:pre;"></div><div style="position:absolute;left:856.80px;top:478.29px;font:400 8.4px/8.4px 'Liberation Sans', sans-serif;color:#222;white-space:pre;">February 29, 2008 12:58 PM</div><div style="position:absolute;left:16.20px;top:493.49px;font:400 8.4px/8.4px 'Liberation Sans', sans-serif;color:#222;white-space:pre;">389</div><div style="position:absolute;left:688.60px;top:493.49px;font:400 8.4px/8.4px 'Liberation Sans', sans-serif;color:#222;white-space:pre;">PLATELET</div><div style="position:absolute;left:776.60px;top:493.49px;font:400 8.4px/8.4px 'Liberation Sans', sans-serif;color:#222;white-space:pre;"></div><div style="position:absolute;left:856.80px;top:493.49px;font:400 8.4px/8.4px 'Liberation Sans', sans-serif;color:#222;white-space:pre;">February 29, 2008 12:58 PM</div><div style="position:absolute;left:13.00px;top:504.70px;width:960.50px;height:15.20px;background:#efeff4"></div><div style="position:absolute;left:16.20px;top:508.69px;font:400 8.4px/8.4px 'Liberation Sans', sans-serif;color:#222;white-space:pre;">62.6</div><div style="position:absolute;left:688.60px;top:508.69px;font:400 8.4px/8.4px 'Liberation Sans', sans-serif;color:#222;white-space:pre;">NEUTROPHILS</div><div style="position:absolute;left:776.60px;top:508.69px;font:400 8.4px/8.4px 'Liberation Sans', sans-serif;color:#222;white-space:pre;"></div><div style="position:absolute;left:856.80px;top:508.69px;font:400 8.4px/8.4px 'Liberation Sans', sans-serif;color:#222;white-space:pre;">February 29, 2008 12:58 PM</div><div style="position:absolute;left:16.20px;top:523.89px;font:400 8.4px/8.4px 'Liberation Sans', sans-serif;color:#222;white-space:pre;">25.1</div><div style="position:absolute;left:688.60px;top:523.89px;font:400 8.4px/8.4px 'Liberation Sans', sans-serif;color:#222;white-space:pre;">LYMPHOCYTES</div><div style="position:absolute;left:776.60px;top:523.89px;font:400 8.4px/8.4px 'Liberation Sans', sans-serif;color:#222;white-space:pre;"></div><div style="position:absolute;left:856.80px;top:523.89px;font:400 8.4px/8.4px 'Liberation Sans', sans-serif;color:#222;white-space:pre;">February 29, 2008 12:58 PM</div><div style="position:absolute;left:13.00px;top:535.10px;width:960.50px;height:15.20px;background:#efeff4"></div><div style="position:absolute;left:16.20px;top:539.09px;font:400 8.4px/8.4px 'Liberation Sans', sans-serif;color:#222;white-space:pre;"></div><div style="position:absolute;left:688.60px;top:539.09px;font:400 8.4px/8.4px 'Liberation Sans', sans-serif;color:#222;white-space:pre;"></div><div style="position:absolute;left:776.60px;top:539.09px;font:400 8.4px/8.4px 'Liberation Sans', sans-serif;color:#222;white-space:pre;"></div><div style="position:absolute;left:856.80px;top:539.09px;font:400 8.4px/8.4px 'Liberation Sans', sans-serif;color:#222;white-space:pre;"></div><div style="position:absolute;left:685.20px;top:266.80px;width:1.00px;height:271.20px;background:#d4d4d8"></div><div style="position:absolute;left:773.20px;top:266.80px;width:1.00px;height:271.20px;background:#d4d4d8"></div><div style="position:absolute;left:853.40px;top:266.80px;width:1.00px;height:271.20px;background:#d4d4d8"></div><div style="position:absolute;left:973.50px;top:247.30px;width:1.00px;height:290.70px;background:#dcdcdc"></div><div style="position:absolute;left:12.40px;top:247.30px;width:0.80px;height:290.70px;background:#e2e2e2"></div><div style="position:absolute;left:3.30px;top:437.00px;width:801.70px;height:47.60px;border:4.2px solid #fb2f6b;border-radius:3px;box-sizing:border-box"></div>
</body></html>
